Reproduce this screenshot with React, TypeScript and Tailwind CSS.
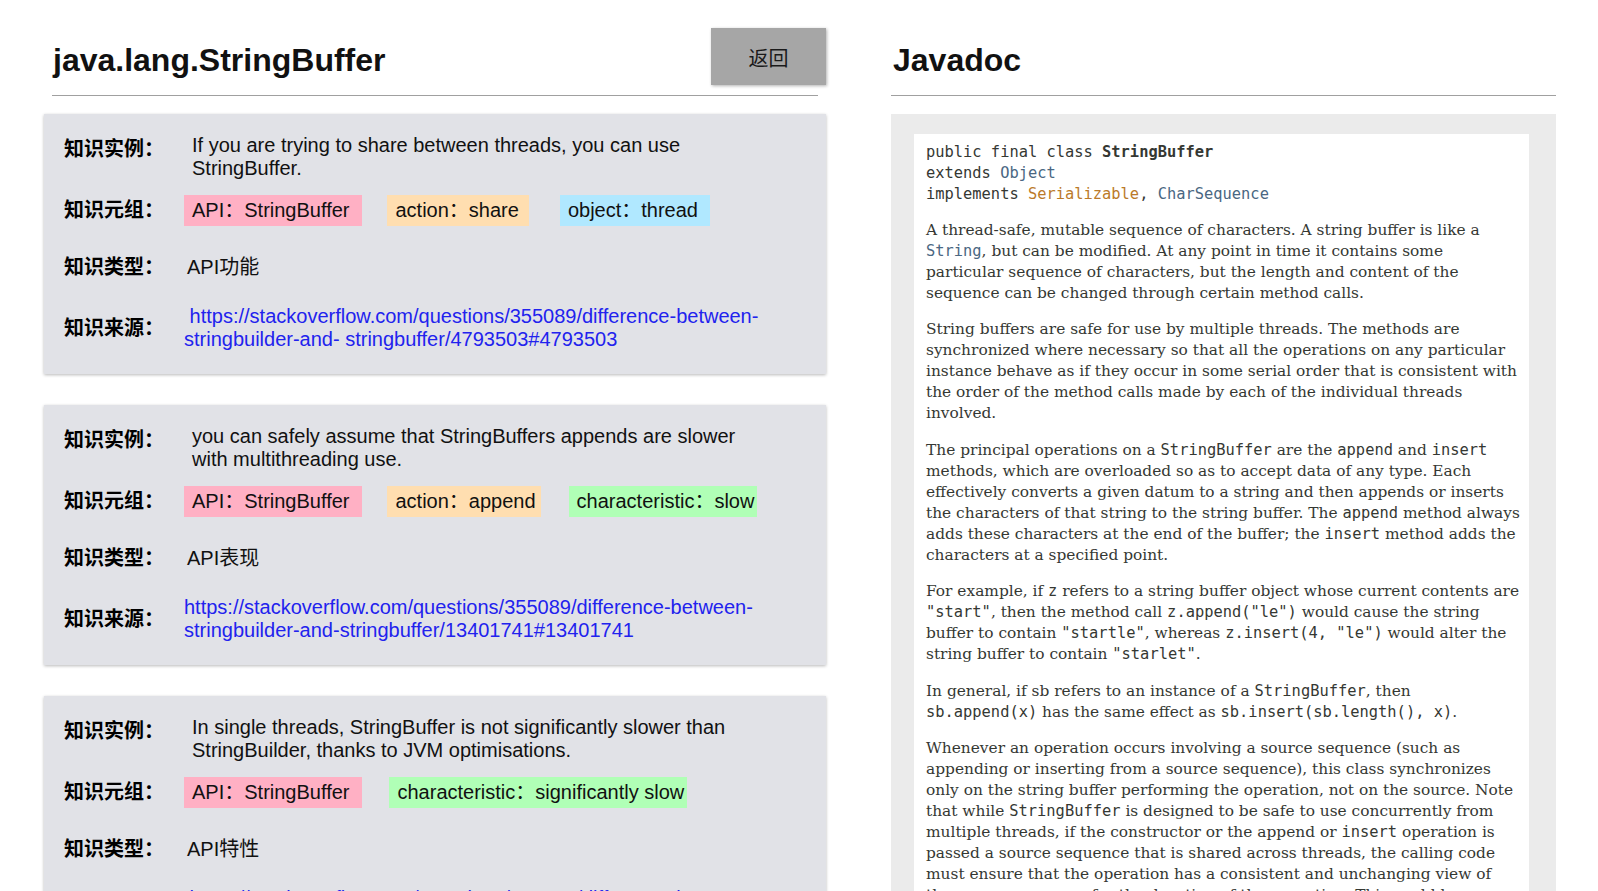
import React from 'react';

type Tag = {
  text: string;
  color: string;
  space: string;
};

type Knowledge = {
  example: string;
  tags: Tag[];
  type: string;
  link: string;
};

const cards: Knowledge[] = [
  {
    example: 'If you are trying to share between threads, you can use StringBuffer.',
    tags: [
      { text: 'API：StringBuffer', color: 'bg-[#ffb0c4]', space: 'pr-[13px]' },
      { text: 'action：share', color: 'bg-[#ffdeb0]', space: 'ml-[25px] pr-[10px]' },
      { text: 'object：thread', color: 'bg-[#b0e8ff]', space: 'ml-[31px] pr-[12px]' },
    ],
    type: 'API功能',
    link: '\u00a0https://stackoverflow.com/questions/355089/difference-between-stringbuilder-and- stringbuffer/4793503#4793503',
  },
  {
    example: 'you can safely assume that StringBuffers appends are slower with multithreading use.',
    tags: [
      { text: 'API：StringBuffer', color: 'bg-[#ffb0c4]', space: 'pr-[13px]' },
      { text: 'action：append', color: 'bg-[#ffdeb0]', space: 'ml-[25px] pr-[5px]' },
      { text: 'characteristic：slow', color: 'bg-[#b0ffb6]', space: 'ml-[28px] pr-[3px]' },
    ],
    type: 'API表现',
    link: 'https://stackoverflow.com/questions/355089/difference-between-stringbuilder-and-stringbuffer/13401741#13401741',
  },
  {
    example: 'In single threads, StringBuffer is not significantly slower than StringBuilder, thanks to JVM optimisations.',
    tags: [
      { text: 'API：StringBuffer', color: 'bg-[#ffb0c4]', space: 'pr-[13px]' },
      { text: 'characteristic：significantly slow', color: 'bg-[#b0ffb6]', space: 'ml-[27px] pr-[3px]' },
    ],
    type: 'API特性',
    link: '\u00a0https://stackoverflow.com/questions/355089/difference-between-stringbuilder-and-stringbuffer/355092#355092',
  },
];

const C = ({ children, link }: { children: React.ReactNode; link?: boolean }) => (
  <code className={`font-['DejaVu_Sans_Mono',monospace] ${link ? 'text-[#4a6782]' : ''}`}>{children}</code>
);

const KnowledgeCard = ({ card }: { card: Knowledge }) => (
  <div className="bg-[#e1e2e7] pl-[20px] pt-[20px] pb-[23px] shadow-[0_1px_3px_rgba(0,0,0,0.28)]">
    {/* 知识实例 */}
    <div className="flex items-start">
      <div className="w-[120px] shrink-0 mt-[4px] font-bold leading-[23px]">知识实例：</div>
      <div className="w-[585px] pl-[8px] leading-[23px] text-[#111]">{card.example}</div>
    </div>

    {/* 知识元组 */}
    <div className="flex items-center mt-[15px]">
      <div className="w-[120px] shrink-0 font-bold leading-[23px]">知识元组：</div>
      <div className="flex">
        {card.tags.map((t, i) => (
          <span key={i} className={`${t.color} ${t.space} pl-[8px] py-[4px] leading-[23px] text-[#111]`}>
            {t.text}
          </span>
        ))}
      </div>
    </div>

    {/* 知识类型 */}
    <div className="flex items-center mt-[30px]">
      <div className="w-[120px] shrink-0 font-bold leading-[23px]">知识类型：</div>
      <div className="pl-[3px] leading-[23px] text-[#111]">{card.type}</div>
    </div>

    {/* 知识来源 */}
    <div className="flex items-center mt-[26px]">
      <div className="w-[120px] shrink-0 font-bold leading-[23px]">知识来源：</div>
      <a href="#" className="w-[585px] leading-[23px] text-[#2222ee]">
        {card.link}
      </a>
    </div>
  </div>
);

export default function App() {
  return (
    <div className="min-h-screen bg-white flex gap-[65px] pl-[44px] font-['Liberation_Sans','Noto_Sans_CJK_SC',sans-serif] text-[20px] text-black">
      {/* left column */}
      <div className="w-[782px] shrink-0">
        <div className="flex items-start justify-between pt-[28px]">
          <h1 className="ml-[9px] mt-[14px] text-[32px] font-bold leading-[37px] text-[#111]">java.lang.StringBuffer</h1>
          <button className="w-[115px] h-[57px] pt-[2px] bg-[#a6a6a6] text-[20px] text-[#1a1a1a] font-['Noto_Sans_CJK_SC',sans-serif] shadow-[1px_1px_3px_rgba(0,0,0,0.3)]">
            返回
          </button>
        </div>
        <div className="mx-[8px] mt-[10px] h-px bg-[#a0a0a0]" />
        <div className="mt-[18px] flex flex-col gap-[31px]">
          {cards.map((c, i) => (
            <KnowledgeCard key={i} card={c} />
          ))}
        </div>
      </div>

      {/* right column */}
      <div className="w-[665px] shrink-0">
        <div className="flex items-start pt-[28px] h-[85px]">
          <h1 className="ml-[2px] mt-[14px] text-[32px] font-bold leading-[37px] text-[#111]">Javadoc</h1>
        </div>
        <div className="mt-[10px] h-px bg-[#a0a0a0]" />
        <div className="mt-[18px] bg-[#ebebeb] pl-[23px] pr-[27px] pt-[20px] pb-[20px]">
          <div className="bg-white pl-[12px] pr-[8.5px] pt-[8px] pb-[12px] text-[15.4px] leading-[21px] text-[#353833] font-['DejaVu_Serif',serif]">
            <div className="font-['DejaVu_Sans_Mono',monospace]">
              <div>
                public final class <b>StringBuffer</b>
              </div>
              <div>
                extends <span className="text-[#4a6782]">Object</span>
              </div>
              <div>
                implements <span className="text-[#bb7a2a]">Serializable</span>,{' '}
                <span className="text-[#4a6782]">CharSequence</span>
              </div>
            </div>

            <p className="mt-[14.5px]">
              A thread-safe, mutable sequence of characters. A string buffer is like a <C link>String</C>, but can be
              modified. At any point in time it contains some particular sequence of characters, but the length and
              content of the sequence can be changed through certain method calls.
            </p>
            <p className="mt-[15.5px]">
              String buffers are safe for use by multiple threads. The methods are synchronized where necessary so that
              all the operations on any particular instance behave as if they occur in some serial order that is
              consistent with the order of the method calls made by each of the individual threads involved.
            </p>
            <p className="mt-[15.5px]">
              The principal operations on a <C>StringBuffer</C> are the <C>append</C> and <C>insert</C> methods, which
              are overloaded so as to accept data of any type. Each effectively converts a given datum to a string and
              then appends or inserts the characters of that string to the string buffer. The <C>append</C> method
              always adds these characters at the end of the buffer; the <C>insert</C> method adds the characters at a
              specified point.
            </p>
            <p className="mt-[15.5px]">
              For example, if <C>z</C> refers to a string buffer object whose current contents are <C>"start"</C>, then
              the method call <C>z.append("le")</C> would cause the string buffer to contain <C>"startle"</C>, whereas{' '}
              <C>z.insert(4, "le")</C> would alter the string buffer to contain <C>"starlet"</C>.
            </p>
            <p className="mt-[15.5px]">
              In general, if sb refers to an instance of a <C>StringBuffer</C>, then <C>sb.append(x)</C> has the same
              effect as <C>sb.insert(sb.length(), x)</C>.
            </p>
            <p className="mt-[15.5px]">
              Whenever an operation occurs involving a source sequence (such as appending or inserting from a source
              sequence), this class synchronizes only on the string buffer performing the operation, not on the source.
              Note that while <C>StringBuffer</C> is designed to be safe to use concurrently from multiple threads, if
              the constructor or the append or <C>insert</C> operation is passed a source sequence that is shared across
              threads, the calling code must ensure that the operation has a consistent and unchanging view of the
              source sequence for the duration of the operation. This could be satisfied by the caller holding a lock
              during the operation's call, by using an immutable source sequence, or by not sharing the source sequence
              across threads.
            </p>
          </div>
        </div>
      </div>
    </div>
  );
}
